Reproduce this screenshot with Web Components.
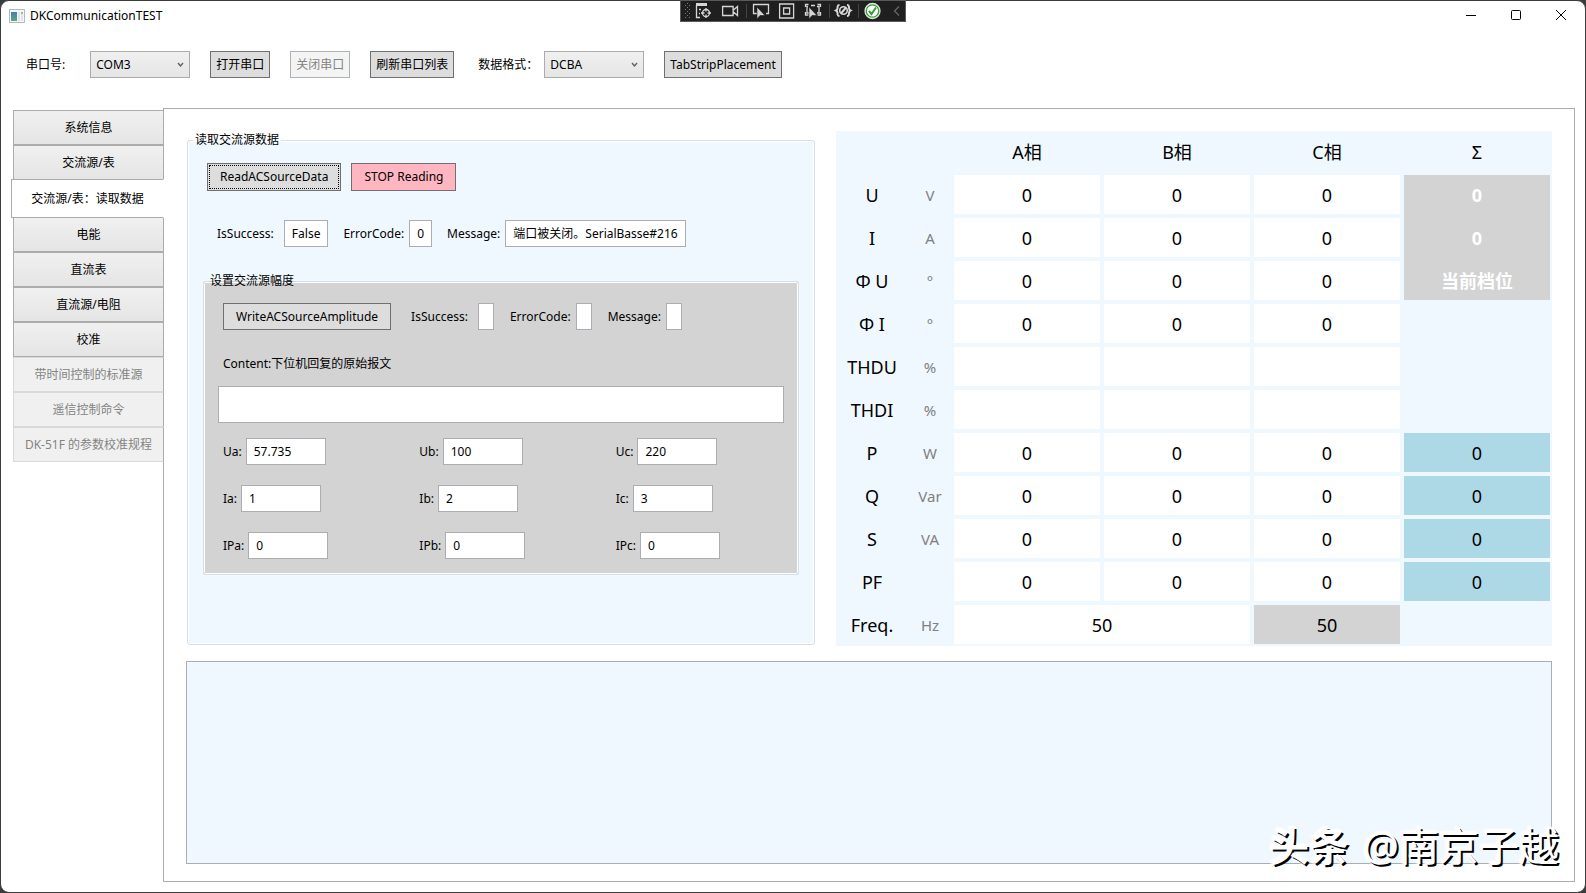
<!DOCTYPE html>
<html lang="zh-CN">
<head>
<meta charset="utf-8">
<title>DKCommunicationTEST</title>
<style>
  html, body {
    height: 100%;
  }
  body {
    margin: 0;
    background: #3b3b3b;
    color: #000;
    font: 12px/16px "Noto Sans", "Noto Sans CJK SC", sans-serif;
  }
</style>
</head>
<body>
<dk-window></dk-window>

<script>
(function () {
  // Registers an element whose shadow root is built from a markup string.
  function define(name, html, setup) {
    const template = document.createElement('template');
    template.innerHTML = html;

    customElements.define(name, class extends HTMLElement {
      connectedCallback() {
        if (this.shadowRoot) {
          return;
        }
        const root = this.attachShadow({ mode: 'open' });
        root.appendChild(template.content.cloneNode(true));
        if (setup) {
          setup(this, root);
        }
      }
    });
  }

  define('dk-button', `
    <style>
      :host {
        display: block;
      }
      button {
        display: block;
        box-sizing: border-box;
        height: 27px;
        margin: 0;
        padding: 0 5px;
        border: 1px solid #707070;
        border-radius: 0;
        background: #ddd;
        color: inherit;
        font: inherit;
        white-space: nowrap;
      }
      button:disabled {
        border-color: #adb2b5;
        background: #f4f4f4;
        color: #838383;
      }
      :host([wide]) button {
        padding: 0 12px;
      }
      :host([tall]) button {
        height: 28px;
      }
      :host([danger]) button {
        background: #ffb6c1;
      }
      :host([focused]) button {
        outline: 1px dotted #000;
        outline-offset: -3px;
      }
    </style>
    <button type="button"><slot></slot></button>
  `, (host, root) => {
    root.querySelector('button').disabled = host.hasAttribute('disabled');
  });

  define('dk-combo', `
    <style>
      :host {
        display: flex;
        align-items: center;
      }
      label {
        white-space: nowrap;
      }
      .box {
        display: grid;
        align-items: center;
        width: 100px;
        height: 27px;
      }
      select, svg {
        grid-area: 1 / 1;
      }
      select {
        appearance: none;
        box-sizing: border-box;
        width: 100%;
        height: 100%;
        margin: 0;
        padding: 0 5px;
        border: 1px solid #acacac;
        border-radius: 0;
        background: linear-gradient(#f0f0f0, #e5e5e5);
        color: inherit;
        font: inherit;
      }
      svg {
        justify-self: end;
        margin-right: 6px;
        pointer-events: none;
      }
      :host([spaced]) {
        gap: 25px;
      }
      :host(:not([spaced])) {
        gap: 6px;
      }
    </style>
    <label for="value"></label>
    <div class="box">
      <select id="value"></select>
      <svg width="7" height="6" viewBox="0 0 7 6" fill="none" stroke="#606060" stroke-width="1.4"><path d="M1 1l2.5 3L6 1"/></svg>
    </div>
  `, (host, root) => {
    root.querySelector('label').textContent = host.getAttribute('label');
    root.querySelector('select').add(new Option(host.getAttribute('value')));
  });

  define('dk-readout', `
    <style>
      :host {
        display: flex;
        align-items: center;
        gap: 5px;
        white-space: nowrap;
      }
      :host([spaced]) {
        gap: 10px;
      }
      output {
        box-sizing: border-box;
        min-width: 16px;
        height: 27px;
        padding: 0 7px;
        border: 1px solid #abadb3;
        background: #fff;
        line-height: 25px;
      }
    </style>
    <label for="value"></label>
    <output id="value"></output>
  `, (host, root) => {
    root.querySelector('label').textContent = host.getAttribute('label');
    root.querySelector('output').textContent = host.getAttribute('value') || '';
  });

  define('dk-field', `
    <style>
      :host {
        display: flex;
        align-items: center;
        gap: 4px;
      }
      input {
        box-sizing: border-box;
        width: 80px;
        height: 27px;
        margin: 0;
        padding: 0 7px;
        border: 1px solid #abadb3;
        border-radius: 0;
        background: #fff;
        color: inherit;
        font: inherit;
      }
    </style>
    <label for="value"></label>
    <input id="value" type="text">
  `, (host, root) => {
    root.querySelector('label').textContent = host.getAttribute('label');
    root.querySelector('input').value = host.getAttribute('value');
  });

  define('dk-group', `
    <style>
      :host {
        display: flex;
        min-width: 0;
      }
      fieldset {
        flex: 1;
        box-sizing: border-box;
        min-width: 0;
        margin: 0;
        padding: var(--group-padding, 15px);
        border: 1px solid #d5dfe5;
        border-radius: 3px;
        background: var(--group-fill, #f0f8ff);
        box-shadow: inset 0 0 0 1px #fff;
      }
      legend {
        margin-left: -10px;
        padding: 0 2px;
      }
    </style>
    <fieldset>
      <legend></legend>
      <slot></slot>
    </fieldset>
  `, (host, root) => {
    root.querySelector('legend').textContent = host.getAttribute('heading');
  });

  define('dk-titlebar', `
    <style>
      :host {
        display: flex;
        align-items: center;
        height: 29px;
        padding: 0 2px 0 8px;
      }
      span {
        flex: 1;
        margin-left: 5px;
      }
      button {
        display: grid;
        place-items: center;
        align-self: start;
        width: 45px;
        height: 28px;
        margin: 0;
        padding: 0;
        border: 0;
        background: none;
      }
      svg {
        display: block;
      }
    </style>
    <svg width="16" height="14" viewBox="0 0 16 14">
      <defs>
        <linearGradient id="pane" x2="0" y2="1">
          <stop offset="0" stop-color="#4a7fa5"/>
          <stop offset="1" stop-color="#5aa58a"/>
        </linearGradient>
      </defs>
      <path fill="#f4f5f6" stroke="#b4b9bd" d="M.5.5h15v13H.5z"/>
      <path fill="url(#pane)" d="M2 3h6v9H2z"/>
      <path fill="#dfe5ea" d="M9 3h2v9H9zM12 3h2v9h-2z"/>
      <path fill="#8bc29d" d="M12 3h2v2h-2z"/>
    </svg>
    <span>DKCommunicationTEST</span>
    <button type="button" aria-label="最小化"><svg width="10" height="10" viewBox="0 0 10 10" stroke="#000"><path d="M0 5.5h10"/></svg></button>
    <button type="button" aria-label="最大化"><svg width="10" height="10" viewBox="0 0 10 10" fill="none" stroke="#000"><rect x=".5" y=".5" width="9" height="9" rx="1"/></svg></button>
    <button type="button" aria-label="关闭"><svg width="10" height="10" viewBox="0 0 10 10" stroke="#000"><path d="M0 0l10 10M10 0L0 10"/></svg></button>
  `);

  // Debugger strip docked over the top edge of the window
  define('debug-strip', `
    <style>
      :host {
        position: absolute;
        top: -1px;
        left: 50%;
        transform: translateX(-50%);
        display: block;
        box-sizing: border-box;
        width: 226px;
        height: 22px;
        border: 1px solid #5a5a5a;
        background: #1f1f1f;
      }
      svg {
        display: block;
      }
    </style>
    <svg width="224" height="20" viewBox="0 0 224 20" fill="none" stroke="#d6d6d6" stroke-width="1.3">
      <defs>
        <pattern id="grip" width="4" height="4" patternUnits="userSpaceOnUse">
          <path fill="#777" stroke="none" d="M0 0h1v1H0zM2 2h1v1H2z"/>
        </pattern>
        <path id="arrow" fill="#d6d6d6" stroke="#1f1f1f" stroke-width=".6" d="M0 0v12l3-3.500h5z"/>
      </defs>
      <path fill="url(#grip)" stroke="none" d="M3 2h6v16H3z"/>
      <path d="M15 3.5h11" stroke-width="3"/>
      <path d="M15.500 4v12.500H19M18 8.500h2M18 12.500h1"/>
      <circle cx="25" cy="12" r="3.500"/>
      <path d="M25 7v3.500M25 13.500V17M20 12h3.500M26.500 12H30"/>
      <path d="M41.600 5.500h10.500v9H41.600zM52.500 9l4-3.500v9l-4-3.500"/>
      <path stroke="#444" stroke-width="1" d="M65.500 3v14M148.500 3v14M177.500 3v14"/>
      <path d="M76 12.500h-3.500v-9h15v9H85"/>
      <use href="#arrow" x="76" y="6"/>
      <path d="M98.600 3h14v14h-14zM102.600 7h6v6h-6z"/>
      <path d="M127 5.500h-1V12h3M136 5.500h2V12h-2M130 4.500h4M124.500 6V3.500h3M139.500 6V3.500h-3M124.500 11v3h3M139.500 11v3h-3"/>
      <use href="#arrow" x="128" y="6"/>
      <path stroke-width="2" d="M158.500 4c-2 0-2 1-2 3 0 1.500-.5 2-1.500 2.500 1 .5 1.500 1 1.500 2.500 0 2 0 3 2 3M166 4c2 0 2 1 2 3 0 1.500.5 2 1.500 2.500-1 .5-1.500 1-1.500 2.500 0 2 0 3-2 3"/>
      <circle cx="162.500" cy="9.500" r="3.800" stroke-width="1.600"/>
      <path stroke-width="2" d="M160 12.500l5-6"/>
      <circle cx="191.500" cy="10" r="7.500" fill="#fff" stroke="#d6e8d6"/>
      <circle cx="191.500" cy="10" r="6.200" stroke="#379c3a"/>
      <path stroke="#379c3a" stroke-width="2" d="M188 10l2.500 3 4.500-6.500"/>
      <path stroke="#666" d="M218 5.500L213.500 10l4.500 4.500"/>
    </svg>
  `);

  define('port-bar', `
    <style>
      :host {
        display: flex;
        align-items: center;
        gap: 20px;
        padding: 21px 25px 0;
      }
      .format {
        margin-left: 4px;
      }
    </style>
    <dk-combo spaced label="串口号:" value="COM3"></dk-combo>
    <dk-button>打开串口</dk-button>
    <dk-button disabled>关闭串口</dk-button>
    <dk-button>刷新串口列表</dk-button>
    <dk-combo class="format" label="数据格式：" value="DCBA"></dk-combo>
    <dk-button>TabStripPlacement</dk-button>
  `);

  const TABS = [
    ['系统信息'],
    ['交流源/表'],
    ['交流源/表：读取数据', 'selected'],
    ['电能'],
    ['直流表'],
    ['直流源/电阻'],
    ['校准'],
    ['带时间控制的标准源', 'disabled'],
    ['遥信控制命令', 'disabled'],
    ['DK-51F 的参数校准规程', 'disabled'],
  ];

  define('tab-strip', `
    <style>
      :host {
        display: block;
        z-index: 1;
      }
      div {
        display: flex;
        flex-direction: column;
        align-items: stretch;
        padding-top: 2px;
      }
      button {
        height: 35px;
        margin: 0 0 0 2px;
        padding: 0 9px;
        border: 1px solid #acacac;
        border-radius: 0;
        background: linear-gradient(#f0f0f0, #e5e5e5);
        color: inherit;
        font: inherit;
        white-space: nowrap;
      }
      button:disabled {
        border-color: #d9d9d9 #acacac #d9d9d9 #d9d9d9;
        background: #f0f0f0;
        color: #838383;
      }
      button[aria-selected="true"] {
        z-index: 1;
        height: 39px;
        margin: -1px 0 -1px;
        border-right-color: #fff;
        background: #fff;
      }
    </style>
    <div role="tablist" aria-orientation="vertical"></div>
  `, (host, root) => {
    const list = root.querySelector('div');
    TABS.forEach(([text, state]) => {
      const tab = document.createElement('button');
      tab.type = 'button';
      tab.setAttribute('role', 'tab');
      tab.setAttribute('aria-selected', String(state === 'selected'));
      tab.disabled = state === 'disabled';
      tab.textContent = text;
      list.appendChild(tab);
    });
  });

  define('amplitude-form', `
    <style>
      :host {
        display: block;
      }
      .row {
        display: flex;
        align-items: center;
        gap: 16px;
        margin-left: 5px;
      }
      .row dk-button {
        margin-right: 4px;
      }
      label {
        display: block;
        margin: 26px 0 14px 5px;
      }
      textarea {
        display: block;
        box-sizing: border-box;
        width: 100%;
        height: 37px;
        margin: 0;
        padding: 4px;
        border: 1px solid #abadb3;
        border-radius: 0;
        font: inherit;
        resize: none;
      }
      .fields {
        display: grid;
        grid-template-columns: 7fr 7fr 6fr;
        gap: 20px 0;
        margin: 15px 0 0 5px;
      }
    </style>
    <div class="row">
      <dk-button wide>WriteACSourceAmplitude</dk-button>
      <dk-readout spaced label="IsSuccess:"></dk-readout>
      <dk-readout label="ErrorCode:"></dk-readout>
      <dk-readout label="Message:"></dk-readout>
    </div>
    <label for="content">Content:下位机回复的原始报文</label>
    <textarea id="content"></textarea>
    <div class="fields">
      <dk-field label="Ua:" value="57.735"></dk-field>
      <dk-field label="Ub:" value="100"></dk-field>
      <dk-field label="Uc:" value="220"></dk-field>
      <dk-field label="Ia:" value="1"></dk-field>
      <dk-field label="Ib:" value="2"></dk-field>
      <dk-field label="Ic:" value="3"></dk-field>
      <dk-field label="IPa:" value="0"></dk-field>
      <dk-field label="IPb:" value="0"></dk-field>
      <dk-field label="IPc:" value="0"></dk-field>
    </div>
  `);

  define('source-reader', `
    <style>
      :host {
        display: flex;
      }
      .outer {
        flex: 1;
      }
      .buttons {
        display: flex;
        gap: 10px;
        margin-left: 4px;
      }
      .status {
        display: flex;
        gap: 15px;
        margin: 29px 0 26px 14px;
      }
      .inner {
        --group-fill: #d3d3d3;
        --group-padding: 14px 14px 15px;
      }
    </style>
    <dk-group class="outer" heading="读取交流源数据">
      <div class="buttons">
        <dk-button wide tall focused>ReadACSourceData</dk-button>
        <dk-button wide tall danger>STOP Reading</dk-button>
      </div>
      <div class="status">
        <dk-readout spaced label="IsSuccess:" value="False"></dk-readout>
        <dk-readout label="ErrorCode:" value="0"></dk-readout>
        <dk-readout label="Message:" value="端口被关闭。SerialBasse#216"></dk-readout>
      </div>
      <dk-group class="inner" heading="设置交流源幅度">
        <amplitude-form></amplitude-form>
      </dk-group>
    </dk-group>
  `);

  // name, unit, phase values, sum
  const ROWS = [
    ['U', 'V', '0', '0', '0', 'range'],
    ['I', 'A', '0', '0', '0', null],
    ['Φ U', '°', '0', '0', '0', null],
    ['Φ I', '°', '0', '0', '0', ''],
    ['THDU', '%', '', '', '', ''],
    ['THDI', '%', '', '', '', ''],
    ['P', 'W', '0', '0', '0', '0'],
    ['Q', 'Var', '0', '0', '0', '0'],
    ['S', 'VA', '0', '0', '0', '0'],
    ['PF', '', '0', '0', '0', '0'],
  ];

  function sumCell(sum) {
    if (sum === null) {
      return '';
    }
    if (sum === 'range') {
      return '<td class="range" rowspan="3"><div><b>0</b><b>0</b><b>当前档位</b></div></td>';
    }
    return sum ? `<td class="sum">${sum}</td>` : '<td></td>';
  }

  define('phase-table', `
    <style>
      :host {
        display: block;
      }
      table {
        width: 100%;
        border-collapse: separate;
        border-spacing: 0;
        table-layout: fixed;
        background: #f0f8ff;
        font-size: 18px;
        line-height: 24px;
        text-align: center;
      }
      .name {
        width: 72px;
      }
      .unit {
        width: 44px;
      }
      tr {
        height: 43px;
      }
      thead tr {
        height: 42px;
      }
      th, td {
        box-sizing: border-box;
        padding: 0;
        border: 2px solid transparent;
        background-clip: padding-box;
        font-weight: normal;
      }
      .value {
        background-color: #fff;
      }
      td.unit {
        color: #808080;
        font-size: 15px;
      }
      .sum {
        background-color: #add8e6;
      }
      .range, .held {
        background-color: #d3d3d3;
      }
      .range {
        color: #fff;
      }
      .range div {
        display: flex;
        flex-direction: column;
        gap: 19px;
      }
    </style>
    <table>
      <colgroup><col class="name"><col class="unit"><col><col><col><col></colgroup>
      <thead>
        <tr><td></td><td></td><th scope="col">A相</th><th scope="col">B相</th><th scope="col">C相</th><th scope="col">Σ</th></tr>
      </thead>
      <tbody></tbody>
    </table>
  `, (host, root) => {
    const rows = ROWS.map(([name, unit, a, b, c, sum]) => `
      <tr>
        <th scope="row">${name}</th><td class="unit">${unit}</td>
        <td class="value">${a}</td><td class="value">${b}</td><td class="value">${c}</td>
        ${sumCell(sum)}
      </tr>`);
    rows.push(`
      <tr>
        <th scope="row">Freq.</th><td class="unit">Hz</td>
        <td class="value" colspan="2">50</td><td class="held">50</td><td></td>
      </tr>`);
    root.querySelector('tbody').innerHTML = rows.join('');
  });

  define('tab-panel', `
    <style>
      :host {
        display: flex;
        flex-direction: column;
        gap: 15px;
        box-sizing: border-box;
        min-width: 0;
        padding: 22px 22px 17px;
        border: 1px solid #acacac;
      }
      .top {
        display: flex;
        gap: 21px;
      }
      source-reader {
        flex: 628 1 0;
        margin: 1px 0 1px 1px;
      }
      phase-table {
        flex: 716 1 0;
      }
      .log {
        flex: 1;
        border: 1px solid #abadb3;
        background: #f0f8ff;
      }
    </style>
    <div class="top">
      <source-reader></source-reader>
      <phase-table></phase-table>
    </div>
    <div class="log" role="log"></div>
  `);

  define('corner-mark', `
    <style>
      :host {
        position: absolute;
        right: 26px;
        bottom: 22px;
        z-index: 2;
        display: flex;
        gap: 14px;
        color: #fff;
        font-size: 40px;
        line-height: 48px;
        text-shadow: 2px 2px 0 #000, 0 0 3px #fff, 0 0 3px #fff, -1px -1px 2px #fff;
      }
      b {
        font-weight: 700;
      }
    </style>
    <b>头条</b><span>@南京子越</span>
  `);

  define('dk-window', `
    <style>
      :host {
        position: relative;
        display: flex;
        flex-direction: column;
        box-sizing: border-box;
        min-height: 100%;
        border: 1px solid #3b3b3b;
        border-radius: 9px;
        background: #fff;
      }
      main {
        flex: 1;
        display: flex;
        padding: 30px 10px 10px;
      }
      tab-strip {
        flex: 0 0 153px;
        margin-right: -1px;
      }
      tab-panel {
        flex: 1;
      }
    </style>
    <dk-titlebar></dk-titlebar>
    <debug-strip></debug-strip>
    <port-bar></port-bar>
    <main>
      <tab-strip></tab-strip>
      <tab-panel></tab-panel>
    </main>
    <corner-mark></corner-mark>
  `);
})();
</script>
</body>
</html>
